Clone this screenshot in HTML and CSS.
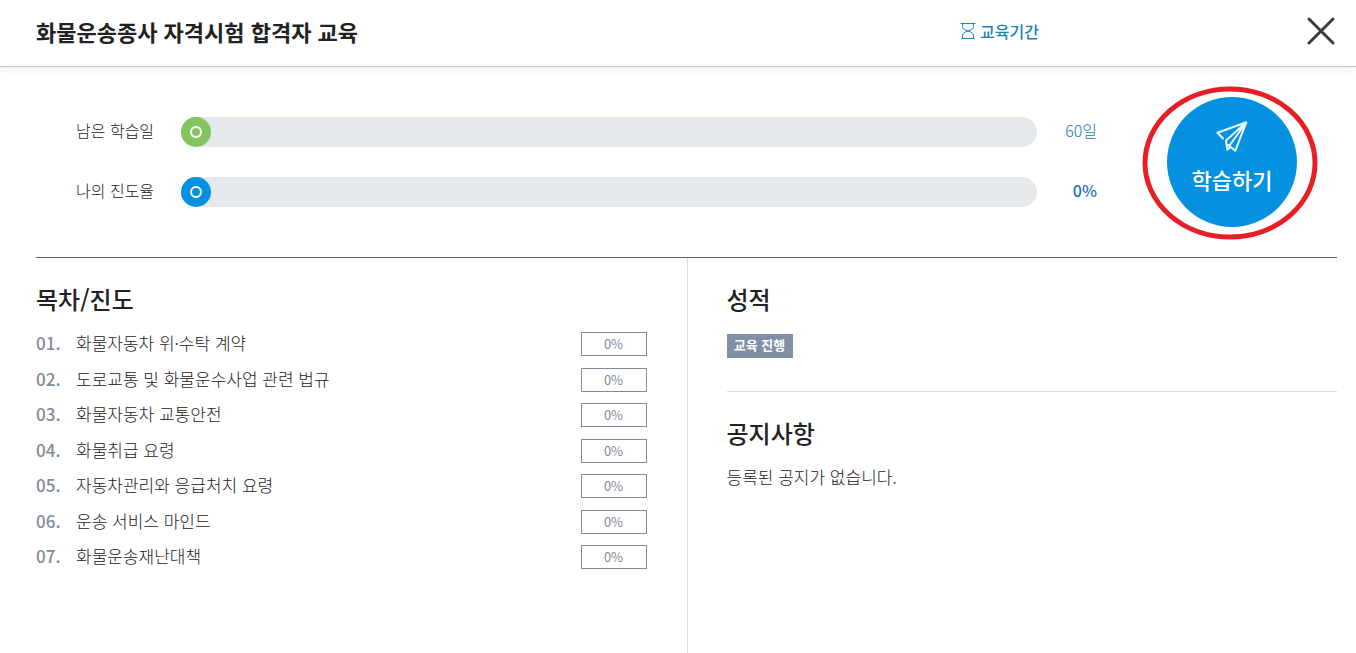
FILE: index.html
```html
<!DOCTYPE html>
<html lang="ko">
<head>
<meta charset="utf-8">
<title>화물운송종사 자격시험 합격자 교육</title>
<link rel="stylesheet" href="styles.css">
</head>
<body class="page">
<header class="header">
  <h1 class="header-title">화물운송종사 자격시험 합격자 교육</h1>
  <p class="period">
    <svg class="period-icon" viewBox="0 0 16 16" width="16" height="16" aria-hidden="true"><path d="M0.5 0.5H15.5M1.5 15.5H14.5M2.5 0.5V3.5C2.5 6 5 7 8 8C11 7 13.5 6 13.5 3.5V0.5M2.5 15.5V12.5C2.5 10 5 9 8 8C11 9 13.5 10 13.5 12.5V15.5"/></svg>
    교육기간
  </p>
  <button class="close" type="button" aria-label="닫기">
    <svg viewBox="0 0 28 28" width="28" height="28" aria-hidden="true"><path d="M2 2L26 26M26 2L2 26"/></svg>
  </button>
</header>
<main class="main">
  <section class="summary">
    <dl class="progress">
      <div class="progress-row">
        <dt class="progress-label">남은 학습일</dt>
        <dd class="track"><span class="knob knob-green"></span></dd>
        <dd class="value">60일</dd>
      </div>
      <div class="progress-row">
        <dt class="progress-label">나의 진도율</dt>
        <dd class="track"><span class="knob"></span></dd>
        <dd class="value value-strong">0%</dd>
      </div>
    </dl>
    <div class="start">
      <button class="start-button" type="button">
        <svg class="plane" viewBox="0 0 32 32" width="32" height="32" aria-hidden="true"><path d="M7.500 18L1.500 11.700L30.300 1.300L19.300 29.700L11.500 23.500M30.300 1.300L10 19.500L11.300 28.700L15 25.500M30.300 1.300L13.500 24.500"/></svg>
        <span>학습하기</span>
      </button>
      <svg class="ring" viewBox="0 0 176 154" aria-hidden="true"><ellipse cx="88" cy="77" rx="85" ry="74"/></svg>
    </div>
  </section>
  <div class="columns">
    <section class="contents">
      <h2 class="heading">목차/진도</h2>
      <ol class="chapters">
        <li class="chapter"><span class="number">01.</span><span class="name">화물자동차 위·수탁 계약</span><span class="rate">0%</span></li>
        <li class="chapter"><span class="number">02.</span><span class="name">도로교통 및 화물운수사업 관련 법규</span><span class="rate">0%</span></li>
        <li class="chapter"><span class="number">03.</span><span class="name">화물자동차 교통안전</span><span class="rate">0%</span></li>
        <li class="chapter"><span class="number">04.</span><span class="name">화물취급 요령</span><span class="rate">0%</span></li>
        <li class="chapter"><span class="number">05.</span><span class="name">자동차관리와 응급처치 요령</span><span class="rate">0%</span></li>
        <li class="chapter"><span class="number">06.</span><span class="name">운송 서비스 마인드</span><span class="rate">0%</span></li>
        <li class="chapter"><span class="number">07.</span><span class="name">화물운송재난대책</span><span class="rate">0%</span></li>
      </ol>
    </section>
    <div class="side">
      <section class="grade">
        <h2 class="heading">성적</h2>
        <span class="badge">교육 진행</span>
      </section>
      <section class="notice">
        <h2 class="heading">공지사항</h2>
        <p class="notice-text">등록된 공지가 없습니다.</p>
      </section>
    </div>
  </div>
</main>
</body>
</html>
```
FILE: styles.css
```css
*,
*::after { box-sizing: border-box; }

.page {
  display: flex;
  flex-direction: column;
  min-height: 100vh;
  margin: 0;
  background: #fff;
  color: #222;
  font-family: "Noto Sans CJK KR", sans-serif;
  font-size: 17px;
  font-weight: 300;
  line-height: 22px;
}

.header {
  display: grid;
  grid-template-columns: 1fr auto 296px;
  align-items: center;
  padding: 14px 21px 18px 36px;
  border-bottom: 1px solid #c6c6c6;
  box-shadow: 0 2px 8px rgba(0, 0, 0, 0.08);
}

.header-title {
  margin: 0;
  color: #222;
  font-size: 22px;
  font-weight: 700;
  line-height: 34px;
}

.period {
  display: flex;
  align-items: center;
  gap: 4px;
  margin: 0;
  color: #1a82b8;
  font-size: 16px;
  font-weight: 500;
}

.period-icon {
  fill: none;
  stroke: currentColor;
}

.close {
  display: flex;
  justify-self: end;
  padding: 0;
  border: 0;
  background: none;
  cursor: pointer;
}

.close path {
  fill: none;
  stroke: #3b3b3f;
  stroke-width: 3;
  stroke-linecap: round;
}

.main {
  display: flex;
  flex: 1;
  flex-direction: column;
  padding: 0 19px 0 36px;
}

.summary {
  display: flex;
  align-items: center;
  gap: 70px;
  padding: 30px 40px;
  border-bottom: 1px solid #666;
}

.progress {
  display: grid;
  flex: 1;
  gap: 30px;
  margin: 0;
}

.progress-row {
  display: grid;
  grid-template-columns: 105px 1fr 60px;
  font-size: 16px;
  line-height: 26px;
}

.track {
  display: flex;
  height: 30px;
  margin: 0;
  border-radius: 15px;
  background: #e5e8ed;
}

.knob {
  display: grid;
  place-items: center;
  width: 30px;
  height: 30px;
  border-radius: 50%;
  background: #0492e0;
}

.knob::after {
  content: "";
  width: 12px;
  height: 12px;
  border: 2px solid #fff;
  border-radius: 50%;
}

.knob-green { background: #82c460; }

.value {
  margin: 0;
  color: #1878b4;
  text-align: right;
}

.value-strong { font-weight: 500; }

.start { position: relative; }

.start-button {
  display: flex;
  flex-direction: column;
  align-items: center;
  gap: 14px;
  width: 130px;
  height: 130px;
  padding: 24px 0 0;
  border: 0;
  border-radius: 50%;
  background: #0492e0;
  color: #fff;
  font-family: inherit;
  font-size: 22px;
  font-weight: 500;
  line-height: 24px;
  cursor: pointer;
}

.plane {
  fill: none;
  stroke: #e9fbff;
  stroke-width: 2;
  stroke-linejoin: round;
}

.ring {
  position: absolute;
  top: -11px;
  left: -25px;
  width: 176px;
  height: 154px;
  fill: none;
  stroke: #e81e26;
  stroke-width: 5;
  pointer-events: none;
}

.columns {
  display: grid;
  flex: 1;
  grid-template-columns: 1fr 1fr;
}

.contents { padding: 24px 40px 24px 0; }

.side {
  padding: 24px 0 24px 39px;
  border-left: 1px solid #ddd;
}

.heading {
  margin: 0;
  font-size: 24px;
  font-weight: 500;
  line-height: 34px;
}

.chapters {
  display: grid;
  grid-template-rows: repeat(3, 36px 35px) 36px;
  margin: 16px 0 0;
  padding: 0;
  list-style: none;
}

.chapter {
  display: grid;
  grid-template-columns: 40px 1fr 66px;
  align-items: start;
}

.number {
  color: #808b9b;
  font-weight: 500;
}

.rate {
  height: 24px;
  border: 1px solid #808b9b;
  color: #808b9b;
  font-size: 13px;
  font-weight: 400;
  text-align: center;
}

.grade {
  padding-bottom: 33px;
  border-bottom: 1px solid #ddd;
}

.badge {
  display: block;
  width: 66px;
  height: 24px;
  margin-top: 18px;
  background: #808ea6;
  color: #fff;
  font-size: 13px;
  font-weight: 700;
  text-align: center;
}

.notice { padding-top: 24px; }

.notice-text { margin: 16px 0 0; }
```
